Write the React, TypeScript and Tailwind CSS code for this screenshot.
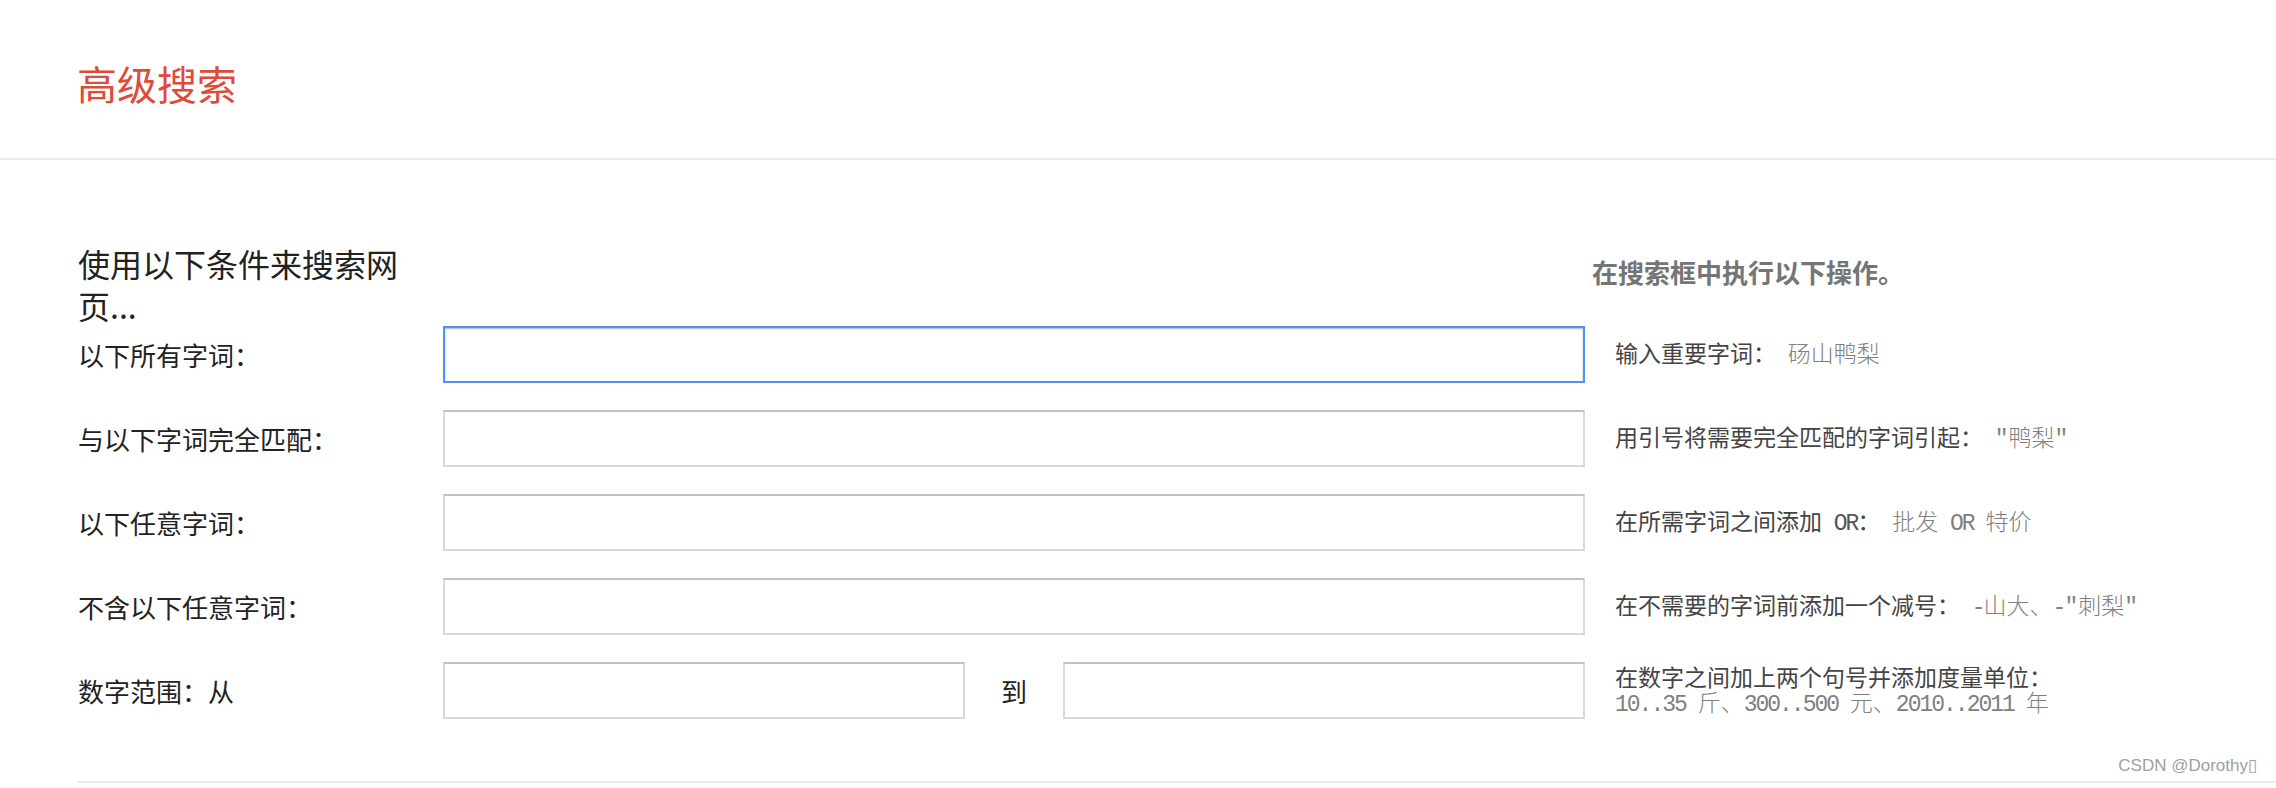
import React from "react";

const cjk = "font-['Noto_Sans_CJK_SC','Noto_Sans',sans-serif]";

// example text: ascii runs are narrowed to look like the half-width mono in the shot
const Example: React.FC<{ text: string; className?: string }> = ({ text, className }) => {
  const parts = text.split(/([\x20-\x7e]+)/).filter((p) => p.length > 0);
  return (
    <span className={`font-['Liberation_Mono','Noto_Sans_CJK_SC',monospace] font-light ${className ?? "text-[#808080]"}`}>
      {parts.map((p, i) =>
        /^[\x20-\x7e]+$/.test(p) ? (
          <span key={i} className="tracking-[-2px]">
            {p}
          </span>
        ) : (
          <span key={i}>{p}</span>
        )
      )}
    </span>
  );
};

const Field: React.FC<{ focused?: boolean }> = ({ focused }) => (
  <input
    type="text"
    className={
      focused
        ? "h-[57px] w-full border-2 border-[#4d90fe] bg-white shadow-[inset_0_1px_2px_rgba(0,0,0,0.3)] outline-none"
        : "h-[57px] w-full border-2 border-[#d9d9d9] border-t-[#c0c0c0] bg-white outline-none"
    }
  />
);

const Row: React.FC<{ label: string; focused?: boolean; children: React.ReactNode }> = ({
  label,
  focused,
  children,
}) => (
  <div className="flex h-[57px] items-center">
    <div className="w-[365px] text-[26px] leading-[36px] text-[#222]">{label}</div>
    <div className="w-[1142px]">
      <Field focused={focused} />
    </div>
    <div className="pl-[30px] text-[23px] leading-[29px] text-[#444]">{children}</div>
  </div>
);

export default function App() {
  return (
    <div className={`relative min-h-[788px] bg-white ${cjk}`}>
      <header className="h-[160px] border-b-2 border-[#ebebeb] pl-[77px] pt-[55px]">
        <h1 className="text-[40px] font-normal leading-[56px] text-[#dd4b39]">高级搜索</h1>
      </header>

      <main className="pl-[78px] pt-[82px]">
        <div className="flex h-[84px]">
          <div className="w-[340px] text-[32px] leading-[42px] text-[#222]">使用以下条件来搜索网页...</div>
          <div className="ml-[1174px] mt-[10px] text-[26px] font-bold leading-[40px] text-[#757575]">
            在搜索框中执行以下操作。
          </div>
        </div>

        <div className="flex flex-col gap-[27px]">
          <Row label="以下所有字词：" focused>
            输入重要字词：
            <Example text=" 砀山鸭梨" />
          </Row>
          <Row label="与以下字词完全匹配：">
            用引号将需要完全匹配的字词引起：
            <Example text=" ″鸭梨″" />
          </Row>
          <Row label="以下任意字词：">
            在所需字词之间添加
            <Example text=" OR" className="text-[#555]" />：
            <Example text=" 批发 OR 特价" />
          </Row>
          <Row label="不含以下任意字词：">
            在不需要的字词前添加一个减号：
            <Example text=" -山大、-″刺梨″" />
          </Row>

          <div className="flex h-[57px] items-center">
            <div className="w-[365px] text-[26px] leading-[36px] text-[#222]">数字范围：从</div>
            <div className="flex w-[1142px] items-center">
              <div className="flex-1">
                <Field />
              </div>
              <span className="px-[36px] text-[26px] leading-[36px] text-[#222]">到</span>
              <div className="flex-1">
                <Field />
              </div>
            </div>
            <div className="flex flex-col pl-[30px] text-[23px] leading-[29px] text-[#444]">
              <span>在数字之间加上两个句号并添加度量单位：</span>
              <Example text="10..35 斤、300..500 元、2010..2011 年" />
            </div>
          </div>
        </div>

        <div className="mt-[62px] h-[2px] bg-[#ebebeb]" />
      </main>

      <div className="absolute right-[19px] top-[754px] font-['Liberation_Sans',sans-serif] text-[17px] leading-[24px] text-[#a0a0a0]">
        CSDN @Dorothy▯
      </div>
    </div>
  );
}
